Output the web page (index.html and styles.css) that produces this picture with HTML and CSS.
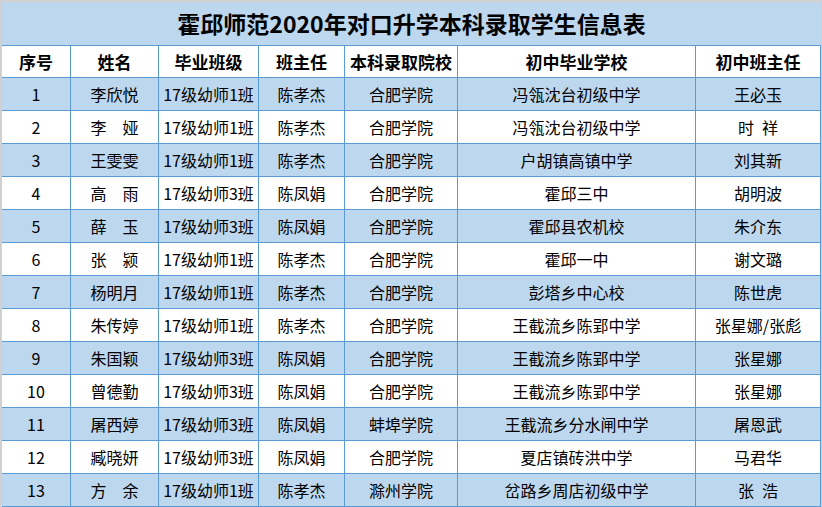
FILE: index.html
```html
<!DOCTYPE html>
<html lang="zh-CN">
<head>
<meta charset="utf-8">
<title>霍邱师范2020年对口升学本科录取学生信息表</title>
<link rel="stylesheet" href="styles.css">
</head>
<body>
<div class="sheet">
  <div class="title">霍邱师范2020年对口升学本科录取学生信息表</div>
  <table class="grid">
    <thead>
      <tr>
        <th class="c1">序号</th>
        <th class="c2">姓名</th>
        <th class="c3">毕业班级</th>
        <th class="c4">班主任</th>
        <th class="c5">本科录取院校</th>
        <th class="c6">初中毕业学校</th>
        <th class="c7">初中班主任</th>
      </tr>
    </thead>
    <tbody>
      <tr class="alt"><td>1</td><td>李欣悦</td><td>17级幼师1班</td><td>陈孝杰</td><td>合肥学院</td><td>冯瓴沈台初级中学</td><td>王必玉</td></tr>
      <tr><td>2</td><td>李　娅</td><td>17级幼师1班</td><td>陈孝杰</td><td>合肥学院</td><td>冯瓴沈台初级中学</td><td>时&ensp;祥</td></tr>
      <tr class="alt"><td>3</td><td>王雯雯</td><td>17级幼师1班</td><td>陈孝杰</td><td>合肥学院</td><td>户胡镇高镇中学</td><td>刘其新</td></tr>
      <tr><td>4</td><td>高　雨</td><td>17级幼师3班</td><td>陈凤娟</td><td>合肥学院</td><td>霍邱三中</td><td>胡明波</td></tr>
      <tr class="alt"><td>5</td><td>薛　玉</td><td>17级幼师3班</td><td>陈凤娟</td><td>合肥学院</td><td>霍邱县农机校</td><td>朱介东</td></tr>
      <tr><td>6</td><td>张　颍</td><td>17级幼师1班</td><td>陈孝杰</td><td>合肥学院</td><td>霍邱一中</td><td>谢文璐</td></tr>
      <tr class="alt"><td>7</td><td>杨明月</td><td>17级幼师1班</td><td>陈孝杰</td><td>合肥学院</td><td>彭塔乡中心校</td><td>陈世虎</td></tr>
      <tr><td>8</td><td>朱传婷</td><td>17级幼师1班</td><td>陈孝杰</td><td>合肥学院</td><td>王截流乡陈郢中学</td><td>张星娜/张彪</td></tr>
      <tr class="alt"><td>9</td><td>朱国颖</td><td>17级幼师3班</td><td>陈凤娟</td><td>合肥学院</td><td>王截流乡陈郢中学</td><td>张星娜</td></tr>
      <tr><td>10</td><td>曾德勤</td><td>17级幼师3班</td><td>陈凤娟</td><td>合肥学院</td><td>王截流乡陈郢中学</td><td>张星娜</td></tr>
      <tr class="alt"><td>11</td><td>屠西婷</td><td>17级幼师3班</td><td>陈凤娟</td><td>蚌埠学院</td><td>王截流乡分水闸中学</td><td>屠恩武</td></tr>
      <tr><td>12</td><td>臧晓妍</td><td>17级幼师3班</td><td>陈凤娟</td><td>合肥学院</td><td>夏店镇砖洪中学</td><td>马君华</td></tr>
      <tr class="alt"><td>13</td><td>方　余</td><td>17级幼师1班</td><td>陈孝杰</td><td>滁州学院</td><td>岔路乡周店初级中学</td><td>张&ensp;浩</td></tr>
    </tbody>
  </table>
</div>
</body>
</html>
```
FILE: styles.css
```css
html, body {
  margin: 0;
  padding: 0;
  background: #d0d0d0;
}
body {
  font-family: "Noto Sans CJK SC", "Noto Sans", sans-serif;
  color: #000;
}
.sheet {
  padding: 2px 0 0 2px;
  width: 819px;
}
.title {
  box-sizing: border-box;
  width: 819px;
  height: 44px;
  background: #bdd7ee;
  border-bottom: 1px solid #5b9bd5;
  text-align: center;
  font-size: 23px;
  font-weight: 700;
  line-height: 43px;
  letter-spacing: 0;
}
.grid {
  width: 819px;
  table-layout: fixed;
  border-collapse: separate;
  border-spacing: 0;
  background: #fff;
}
.grid th,
.grid td {
  box-sizing: border-box;
  padding: 0;
  border-right: 1px solid #5b9bd5;
  border-bottom: 1px solid #5b9bd5;
  text-align: center;
  vertical-align: middle;
  white-space: nowrap;
  overflow: hidden;
}
.grid th {
  height: 32px;
  font-size: 17px;
  font-weight: 700;
  line-height: 20px;
}
.grid td {
  height: 33px;
  font-size: 16px;
  font-weight: 400;
  line-height: 20px;
}
.grid .alt td {
  background: #bdd7ee;
}
.c1 { width: 69px; }
.c2 { width: 88px; }
.c3 { width: 100px; }
.c4 { width: 86px; }
.c5 { width: 113px; }
.c6 { width: 238px; }
.c7 { width: 125px; }
```
